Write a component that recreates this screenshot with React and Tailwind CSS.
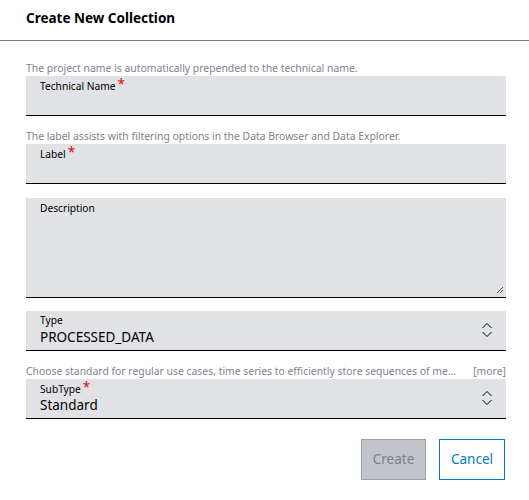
import React from "react";

const Req = () => (
  <span className="relative top-[-1px] leading-none text-[#e20015] text-[13.5px] ml-[2px]">*</span>
);

const Chevrons = () => (
  <svg width="12" height="16" viewBox="0 0 12 16" className="absolute right-[13px] top-[11px]">
    <path d="M1.5 6 L6 1.5 L10.5 6" fill="none" stroke="#000" strokeWidth="1" />
    <path d="M1.5 10 L6 14.5 L10.5 10" fill="none" stroke="#000" strokeWidth="1" />
  </svg>
);

const Helper = ({ children, right }) => (
  <div className="flex justify-between text-[10.4px] leading-[15px] text-[#7d8389] whitespace-nowrap">
    <span>{children}</span>
    {right && <span className="ml-2">{right}</span>}
  </div>
);

const Field = ({ label, req, className = "h-[40px]" }) => (
  <div className={`relative bg-[#e0e2e5] border-b border-black ${className}`}>
    <div className="pl-[14px] pt-[3px] h-[18px] text-[10.2px] leading-[15px] text-black">
      {label}
      {req && <Req />}
    </div>
  </div>
);

const Select = ({ label, value, req }) => (
  <div className="relative bg-[#e0e2e5] border-b border-black h-[40px]">
    <div className="pl-[14px] pt-[3px] h-[16px] text-[10.2px] leading-[12px] text-black whitespace-nowrap">
      {label}
      {req && <Req />}
    </div>
    <div className="pl-[14px] text-[13.5px] leading-[20px] text-black">{value}</div>
    <Chevrons />
  </div>
);

export default function App() {
  return (
    <div className="w-[529px] h-[500px] bg-white" style={{ fontFamily: '"Noto Sans", "Open Sans", sans-serif' }}>
      <div className="h-[41px] border-b border-[#7a7a7a] pl-[26px] flex items-center">
        <h1 className="text-[13.5px] font-bold text-black leading-none pb-[3px]">Create New Collection</h1>
      </div>
      <div className="px-[26px] pr-[23px]">
        <div className="pt-[20px]">
          <Helper>The project name is automatically prepended to the technical name.</Helper>
        </div>
        <Field label="Technical Name" req />
        <div className="pt-[13px]">
          <Helper>The label assists with filtering options in the Data Browser and Data Explorer.</Helper>
        </div>
        <Field label="Label" req />
        <div className="mt-[14px] relative">
          <Field label="Description" className="h-[100px]" />
          <svg width="8" height="8" viewBox="0 0 8 8" className="absolute right-[2px] bottom-[4px]">
            <path d="M1 7 L7 1 M4 7 L7 4" stroke="#555" strokeWidth="1" />
          </svg>
        </div>
        <div className="mt-[13px]">
          <Select label="Type" value="PROCESSED_DATA" />
        </div>
        <div className="pt-[13px]">
          <Helper right="[more]">Choose standard for regular use cases, time series to efficiently store sequences of me...</Helper>
        </div>
        <Select label="SubType" value="Standard" req />
        <div className="flex justify-end gap-[13px] mt-[20px] pr-[1px]">
          <button className="w-[65px] h-[41px] bg-[#c1c5ca] border border-[#9ea2a6] text-[#7a8088] text-[13.5px]">Create</button>
          <button className="w-[66px] h-[41px] bg-white border border-[#007bc0] text-[#007bc0] text-[13.5px]">Cancel</button>
        </div>
      </div>
    </div>
  );
}
